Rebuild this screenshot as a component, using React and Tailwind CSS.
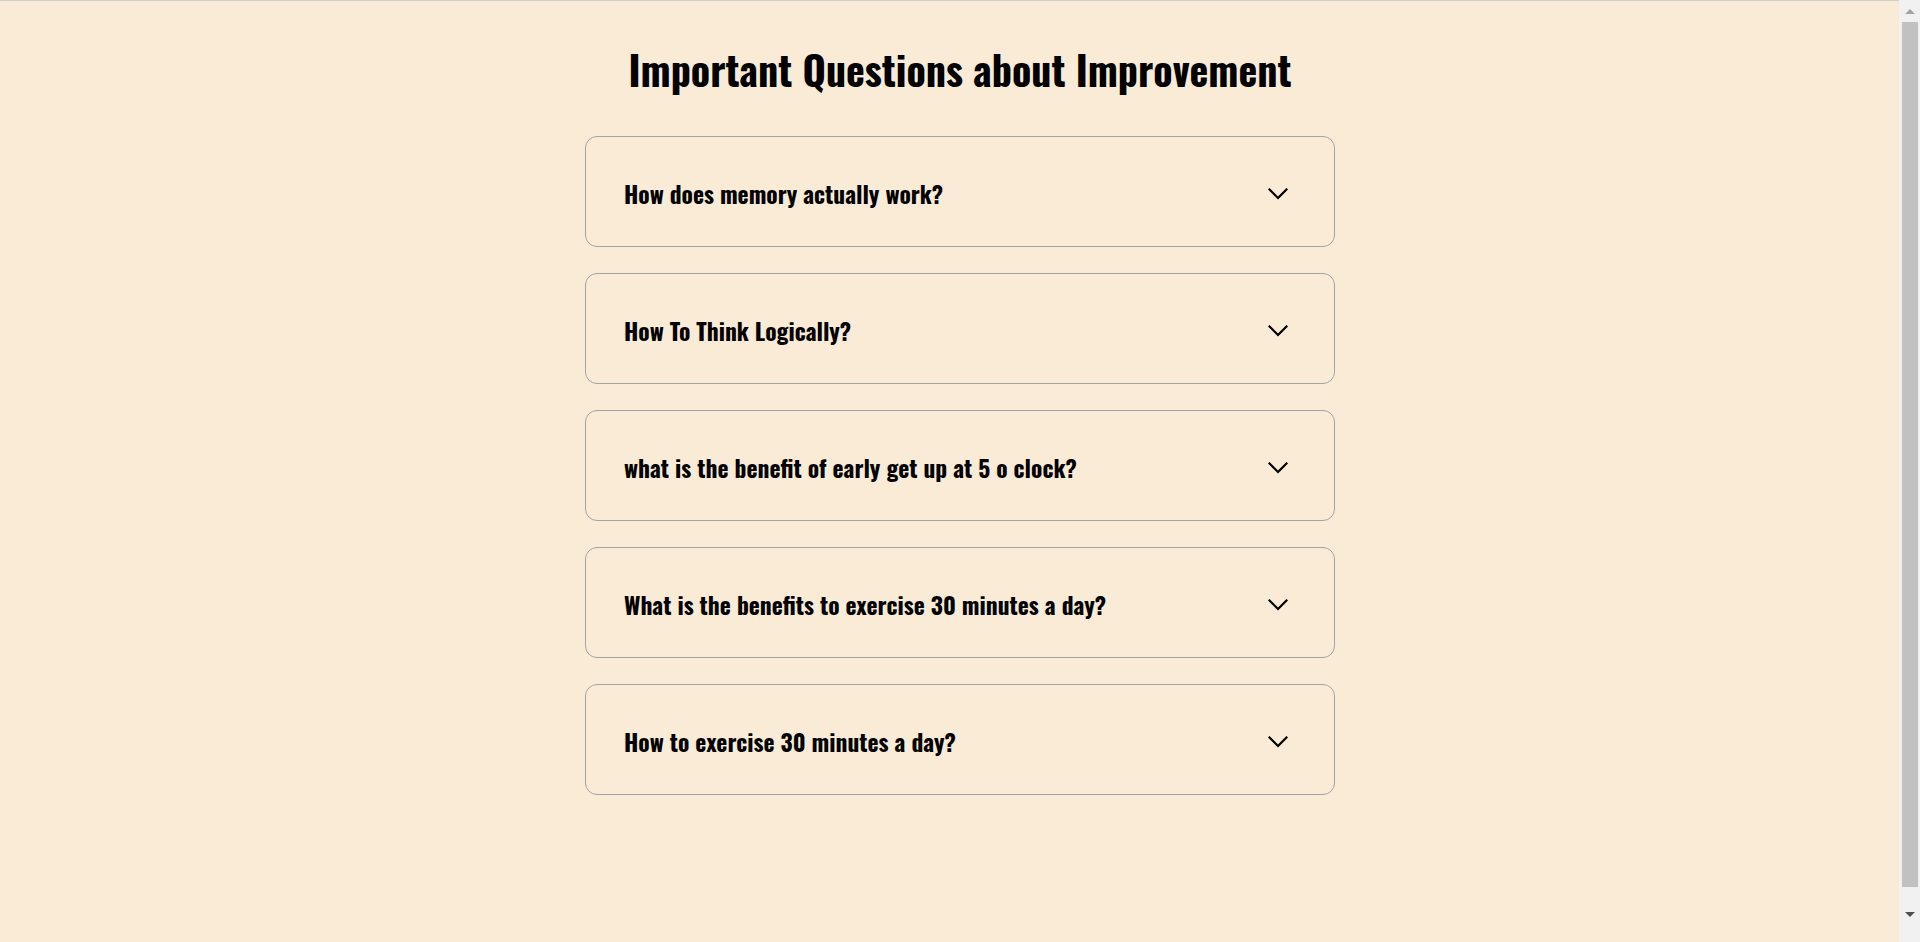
import React, { useState } from 'react';

const QUESTIONS = [
  'How does memory actually work?',
  'How To Think Logically?',
  'what is the benefit of early get up at 5 o clock?',
  'What is the benefits to exercise 30 minutes a day?',
  'How to exercise 30 minutes a day?',
];

const FONT = "font-['Oswald','Liberation_Sans_Narrow','DejaVu_Sans_Condensed','Liberation_Sans',sans-serif]";

function Chevron() {
  return (
    <svg width="20" height="12" viewBox="0 0 20 12" fill="none" className="shrink-0">
      <polyline points="1.5,1.5 10,10 18.5,1.5" stroke="#000" strokeWidth="2.2" strokeLinecap="square" />
    </svg>
  );
}

function Item({ q }) {
  const [open, setOpen] = useState(false);
  return (
    <div className="rounded-[12px] border border-[#a3a3a3]">
      <button
        onClick={() => setOpen(!open)}
        className="flex h-[109px] w-full items-center justify-between pl-[38px] pr-[46px] pt-[4px] text-left"
      >
        <span className="text-[23.5px] font-bold text-black">{q}</span>
        <Chevron />
      </button>
    </div>
  );
}

// the browser's scrollbar, drawn over the right edge
function FakeScrollbar() {
  return (
    <div className="fixed right-0 top-0 flex h-screen w-[21px] flex-col items-center bg-[#f1f1f1]">
      <div className="flex h-[22px] w-full items-center justify-center">
        <div className="h-0 w-0 border-x-[5px] border-b-[5px] border-x-transparent border-b-[#a3a3a3]" />
      </div>
      <div className="ml-[1px] h-[865px] w-[16px] bg-[#c1c1c1]" />
      <div className="flex flex-1 items-center justify-center">
        <div className="h-0 w-0 border-x-[5px] border-t-[5px] border-x-transparent border-t-[#505050]" />
      </div>
    </div>
  );
}

export default function App() {
  return (
    <div className={`min-h-[989px] overflow-x-hidden border-t border-[#cfcfcf] bg-[#faebd7] ${FONT}`}>
      <div className="flex w-screen flex-col items-center">
        <h1 className="mt-[36px] text-[40px] font-bold leading-[64px] text-black">
          Important Questions about Improvement
        </h1>
        <div className="mt-[35px] flex w-[750px] flex-col gap-[26px]">
          {QUESTIONS.map((q) => (
            <Item key={q} q={q} />
          ))}
        </div>
      </div>
      <FakeScrollbar />
    </div>
  );
}
